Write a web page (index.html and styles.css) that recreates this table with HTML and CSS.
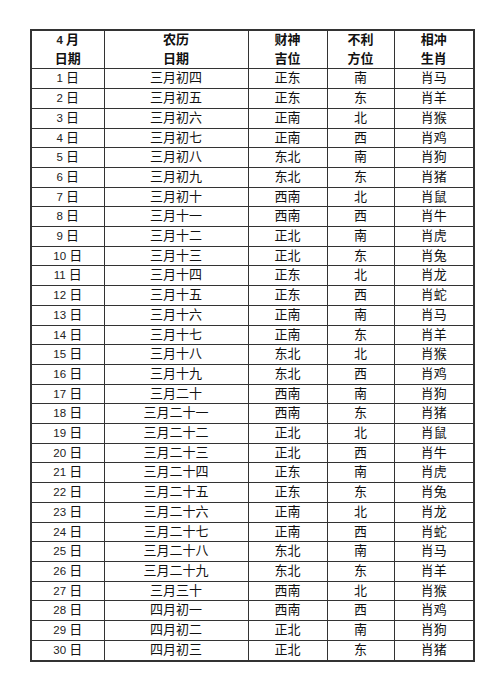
FILE: index.html
```html
<!DOCTYPE html>
<html lang="zh">
<head>
<meta charset="utf-8">
<link rel="stylesheet" href="styles.css">
</head>
<body>
<table class="cal">
<colgroup><col class="c1"><col class="c2"><col class="c3"><col class="c4"><col class="c5"></colgroup>
<thead>
<tr><th><span class="n">4 </span>月<br>日期</th><th>农历<br>日期</th><th>财神<br>吉位</th><th>不利<br>方位</th><th>相冲<br>生肖</th></tr>
</thead>
<tbody>
<tr><td><span class="n">1 </span>日</td><td>三月初四</td><td>正东</td><td>南</td><td>肖马</td></tr>
<tr><td><span class="n">2 </span>日</td><td>三月初五</td><td>正东</td><td>东</td><td>肖羊</td></tr>
<tr><td><span class="n">3 </span>日</td><td>三月初六</td><td>正南</td><td>北</td><td>肖猴</td></tr>
<tr><td><span class="n">4 </span>日</td><td>三月初七</td><td>正南</td><td>西</td><td>肖鸡</td></tr>
<tr><td><span class="n">5 </span>日</td><td>三月初八</td><td>东北</td><td>南</td><td>肖狗</td></tr>
<tr><td><span class="n">6 </span>日</td><td>三月初九</td><td>东北</td><td>东</td><td>肖猪</td></tr>
<tr><td><span class="n">7 </span>日</td><td>三月初十</td><td>西南</td><td>北</td><td>肖鼠</td></tr>
<tr><td><span class="n">8 </span>日</td><td>三月十一</td><td>西南</td><td>西</td><td>肖牛</td></tr>
<tr><td><span class="n">9 </span>日</td><td>三月十二</td><td>正北</td><td>南</td><td>肖虎</td></tr>
<tr><td><span class="n">10 </span>日</td><td>三月十三</td><td>正北</td><td>东</td><td>肖兔</td></tr>
<tr><td><span class="n">11 </span>日</td><td>三月十四</td><td>正东</td><td>北</td><td>肖龙</td></tr>
<tr><td><span class="n">12 </span>日</td><td>三月十五</td><td>正东</td><td>西</td><td>肖蛇</td></tr>
<tr><td><span class="n">13 </span>日</td><td>三月十六</td><td>正南</td><td>南</td><td>肖马</td></tr>
<tr><td><span class="n">14 </span>日</td><td>三月十七</td><td>正南</td><td>东</td><td>肖羊</td></tr>
<tr><td><span class="n">15 </span>日</td><td>三月十八</td><td>东北</td><td>北</td><td>肖猴</td></tr>
<tr><td><span class="n">16 </span>日</td><td>三月十九</td><td>东北</td><td>西</td><td>肖鸡</td></tr>
<tr><td><span class="n">17 </span>日</td><td>三月二十</td><td>西南</td><td>南</td><td>肖狗</td></tr>
<tr><td><span class="n">18 </span>日</td><td>三月二十一</td><td>西南</td><td>东</td><td>肖猪</td></tr>
<tr><td><span class="n">19 </span>日</td><td>三月二十二</td><td>正北</td><td>北</td><td>肖鼠</td></tr>
<tr><td><span class="n">20 </span>日</td><td>三月二十三</td><td>正北</td><td>西</td><td>肖牛</td></tr>
<tr><td><span class="n">21 </span>日</td><td>三月二十四</td><td>正东</td><td>南</td><td>肖虎</td></tr>
<tr><td><span class="n">22 </span>日</td><td>三月二十五</td><td>正东</td><td>东</td><td>肖兔</td></tr>
<tr><td><span class="n">23 </span>日</td><td>三月二十六</td><td>正南</td><td>北</td><td>肖龙</td></tr>
<tr><td><span class="n">24 </span>日</td><td>三月二十七</td><td>正南</td><td>西</td><td>肖蛇</td></tr>
<tr><td><span class="n">25 </span>日</td><td>三月二十八</td><td>东北</td><td>南</td><td>肖马</td></tr>
<tr><td><span class="n">26 </span>日</td><td>三月二十九</td><td>东北</td><td>东</td><td>肖羊</td></tr>
<tr><td><span class="n">27 </span>日</td><td>三月三十</td><td>西南</td><td>北</td><td>肖猴</td></tr>
<tr><td><span class="n">28 </span>日</td><td>四月初一</td><td>西南</td><td>西</td><td>肖鸡</td></tr>
<tr><td><span class="n">29 </span>日</td><td>四月初二</td><td>正北</td><td>南</td><td>肖狗</td></tr>
<tr><td><span class="n">30 </span>日</td><td>四月初三</td><td>正北</td><td>东</td><td>肖猪</td></tr>
</tbody>
</table>
</body>
</html>
```
FILE: styles.css
```css
html, body {
  margin: 0;
  padding: 0;
  background: #ffffff;
}
body {
  font-family: "Liberation Sans", "Noto Sans CJK SC", sans-serif;
  color: #111;
}
.cal {
  border-collapse: collapse;
  margin: 29px 0 0 30px;
  table-layout: fixed;
  width: 443px;
  border: 2px solid #333;
}
.c1 { width: 73px; }
.c2 { width: 144px; }
.c3 { width: 79px; }
.c4 { width: 67px; }
.c5 { width: 80px; }
.cal th, .cal td {
  border: 1px solid #333;
  padding: 0;
  text-align: center;
  font-size: 13px;
  line-height: 18.7px;
  white-space: nowrap;
}
.cal th {
  font-weight: bold;
  height: 36.5px;
}
.cal td {
  height: 18.7px;
}
.n {
  font-size: 11.5px;
  color: #222;
}
```
